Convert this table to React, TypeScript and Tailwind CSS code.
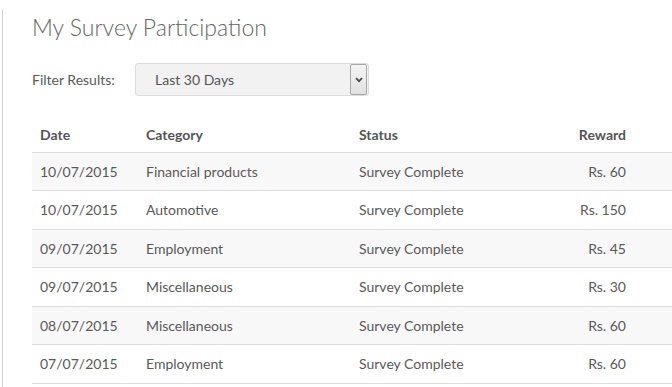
const rows = [
  { date: '10/07/2015', category: 'Financial products', status: 'Survey Complete', reward: 'Rs. 60' },
  { date: '10/07/2015', category: 'Automotive', status: 'Survey Complete', reward: 'Rs. 150' },
  { date: '09/07/2015', category: 'Employment', status: 'Survey Complete', reward: 'Rs. 45' },
  { date: '09/07/2015', category: 'Miscellaneous', status: 'Survey Complete', reward: 'Rs. 30' },
  { date: '08/07/2015', category: 'Miscellaneous', status: 'Survey Complete', reward: 'Rs. 60' },
  { date: '07/07/2015', category: 'Employment', status: 'Survey Complete', reward: 'Rs. 60' },
]

const App = () => {
  return (
    <div className="h-[387px] w-[672px] overflow-hidden bg-white pt-[10px] font-['Lato','Liberation_Sans',sans-serif] text-[#595959]">
      <div className="ml-[2px] h-full border-l border-l-[#d0d0d0] pl-[29px]">
        <h1 className="pt-[2px] text-[23px] font-light leading-[30px] text-[#666]">
          My Survey Participation
        </h1>

        <div className="mt-[21px] flex items-center">
          <label className="w-[103px] text-[14px]">Filter Results:</label>
          <div className="flex h-[33px] w-[234px] items-center rounded-[3px] border border-[#dcdcdc] bg-[#f2f2f2]">
            <span className="flex-1 pl-[19px] text-[14px] text-[#555]">Last 30 Days</span>
            <span className="mr-px flex h-[31px] w-[17px] items-center justify-center rounded-[2px] border border-[#a8a8a8] bg-gradient-to-b from-[#f4f4f4] to-[#e2e2e2]">
              <svg width="8" height="6" viewBox="0 0 8 6">
                <path d="M1 1.2 L4 4.2 L7 1.2" fill="none" stroke="#4a4a4a" strokeWidth="1.8" />
              </svg>
            </span>
          </div>
        </div>

        <table className="mt-[21px] w-[700px] table-fixed border-collapse text-left text-[14px]">
          <thead>
            <tr className="h-[35px] border-b border-b-[#dddddd]">
              <th className="w-[106px] pl-2 font-bold text-[#555]">Date</th>
              <th className="w-[213px] pl-2 font-bold text-[#555]">Category</th>
              <th className="w-[160px] pl-2 font-bold text-[#555]">Status</th>
              <th className="w-[123px] pr-2 text-right font-bold text-[#555]">Reward</th>
              <th />
            </tr>
          </thead>
          <tbody>
            {rows.map((r, i) => (
              <tr
                key={i}
                className={`h-[38.5px] border-b border-b-[#dddddd] ${i % 2 === 0 ? 'bg-[#f8f8f8]' : 'bg-white'}`}
              >
                <td className="pl-2">{r.date}</td>
                <td className="pl-2">{r.category}</td>
                <td className="pl-2">{r.status}</td>
                <td className="pr-2 text-right">{r.reward}</td>
                <td />
              </tr>
            ))}
          </tbody>
        </table>
      </div>
    </div>
  )
}

export default App
